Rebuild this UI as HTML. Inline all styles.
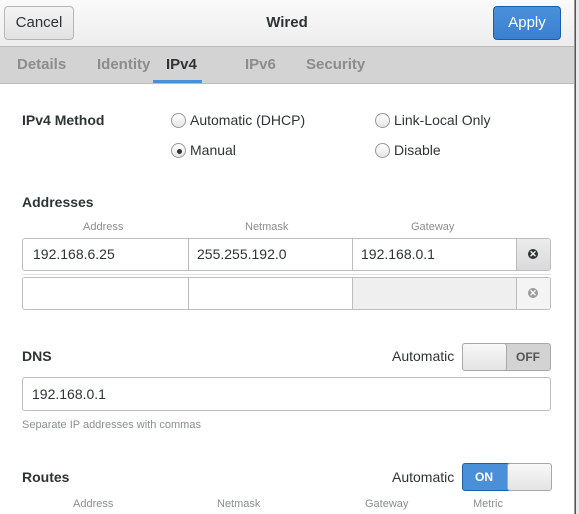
<!DOCTYPE html>
<html><head><meta charset="utf-8"><style>
body{margin:0;width:579px;height:514px;overflow:hidden;background:#e9e9e9;font-family:"Liberation Sans",sans-serif;font-size:14px;color:#2e3436;position:relative}
.a{position:absolute}
.win{left:0;top:0;width:574px;height:514px;background:#fff;border-right:1px solid #9a9a9a;overflow:hidden}
.hdr{left:0;top:0;width:574px;height:46px;background:linear-gradient(#fafafa,#ededed);border-bottom:1px solid #bcbcbc}
.btn{top:6px;height:32px;border-radius:4px;line-height:32px;text-align:center;font-size:15px}
.tabs{left:0;top:47px;width:574px;height:36px;background:#d3d3d3;border-bottom:1px solid #bcbcbc}
.tab{top:56px;font-size:15px;font-weight:bold;color:#8c8c8c}
.b{font-weight:bold}
.radio{width:13px;height:13px;border:1px solid #9a9a9a;border-radius:50%;background:linear-gradient(#fff,#e6e6e6)}
.cell{height:32px;border:1px solid #bdbdbd;background:#fff;box-sizing:border-box;line-height:30px;padding-left:8px}
.sm{font-size:11px;color:#8b8e8f}
.xc{width:10px;height:10px;border-radius:50%;color:#fff;font-size:9px;line-height:10px;text-align:center;font-weight:bold}
</style></head><body>
<div class="a" style="left:575px;top:0;width:1px;height:514px;background:#555"></div>
<div class="a win">
 <div class="a hdr"></div>
 <div class="a btn" style="left:4px;width:68px;border:1px solid #b6b6b6;background:linear-gradient(#f4f4f4,#e2e2e2);color:#2e3436">Cancel</div>
 <div class="a b" style="left:0;width:574px;top:14px;text-align:center;font-size:15px">Wired</div>
 <div class="a btn" style="left:493px;width:66px;border:1px solid #1d5da8;background:linear-gradient(#4a90d9,#3a80d0);color:#fff">Apply</div>
 <div class="a tabs"></div>
 <div class="a tab" style="left:17px">Details</div>
 <div class="a tab" style="left:97px">Identity</div>
 <div class="a tab" style="left:166px;color:#2e3436">IPv4</div>
 <div class="a" style="left:153px;top:80px;width:49px;height:3px;background:#4a90d9"></div>
 <div class="a tab" style="left:245px">IPv6</div>
 <div class="a tab" style="left:306px">Security</div>

 <div class="a b" style="left:22px;top:112px">IPv4 Method</div>
 <div class="a radio" style="left:171px;top:113px"></div><div class="a" style="left:190px;top:112px">Automatic (DHCP)</div>
 <div class="a radio" style="left:375px;top:113px"></div><div class="a" style="left:394px;top:112px">Link-Local Only</div>
 <div class="a radio" style="left:171px;top:143px"></div><div class="a" style="left:177px;top:149px;width:5px;height:5px;border-radius:50%;background:#2e3436"></div><div class="a" style="left:190px;top:142px">Manual</div>
 <div class="a radio" style="left:375px;top:143px"></div><div class="a" style="left:394px;top:142px">Disable</div>

 <div class="a b" style="left:22px;top:194px">Addresses</div>
 <div class="a sm" style="left:83px;top:221px">Address</div>
 <div class="a sm" style="left:245px;top:221px">Netmask</div>
 <div class="a sm" style="left:411px;top:221px">Gateway</div>
 <div class="a" style="left:22px;top:238px;width:529px;height:33px;border:1px solid #bdbdbd;border-radius:3px;overflow:hidden;box-sizing:border-box;display:flex">
  <div class="cell" style="width:166px;border:0;border-right:1px solid #bdbdbd;padding-left:10px">192.168.6.25</div>
  <div class="cell" style="width:164px;border:0;border-right:1px solid #bdbdbd">255.255.192.0</div>
  <div class="cell" style="width:164px;border:0;border-right:1px solid #bdbdbd">192.168.0.1</div>
  <div style="flex:1;background:linear-gradient(#ececec,#dadada);position:relative"><div class="a xc" style="left:11px;top:10px;background:#2e3436">✕</div></div>
 </div>
 <div class="a" style="left:22px;top:274px;width:529px;height:1px;background:#e0e0e0"></div>
 <div class="a" style="left:22px;top:277px;width:529px;height:33px;border:1px solid #bdbdbd;border-radius:3px;overflow:hidden;box-sizing:border-box;display:flex">
  <div class="cell" style="width:166px;border:0;border-right:1px solid #bdbdbd"></div>
  <div class="cell" style="width:164px;border:0;border-right:1px solid #bdbdbd"></div>
  <div class="cell" style="width:164px;border:0;border-right:1px solid #bdbdbd;background:#efefef"></div>
  <div style="flex:1;background:#f4f4f4;position:relative"><div class="a xc" style="left:11px;top:10px;background:#9a9a9a">✕</div></div>
 </div>

 <div class="a b" style="left:22px;top:348px">DNS</div>
 <div class="a" style="left:392px;top:348px">Automatic</div>
 <div class="a" style="left:462px;top:343px;width:89px;height:28px;border:1px solid #a8a8a8;border-radius:3px;background:#d3d3d3;box-sizing:border-box">
  <div class="a" style="left:-1px;top:-1px;width:45px;height:28px;border:1px solid #a8a8a8;border-radius:3px;background:linear-gradient(#f8f8f8,#e4e4e4);box-sizing:border-box"></div>
  <div class="a b" style="left:53px;top:6px;font-size:12px;color:#555">OFF</div>
 </div>
 <div class="a" style="left:22px;top:377px;width:529px;height:34px;border:1px solid #bdbdbd;border-radius:3px;box-sizing:border-box;line-height:32px;padding-left:9px">192.168.0.1</div>
 <div class="a sm" style="left:22px;top:419px">Separate IP addresses with commas</div>

 <div class="a b" style="left:22px;top:469px">Routes</div>
 <div class="a" style="left:392px;top:469px">Automatic</div>
 <div class="a" style="left:462px;top:463px;width:89px;height:28px;border:1px solid #1d5da8;border-radius:3px;background:#4a90d9;box-sizing:border-box">
  <div class="a b" style="left:12px;top:6px;font-size:12px;color:#fff">ON</div>
  <div class="a" style="left:44px;top:-1px;width:45px;height:28px;border:1px solid #a8a8a8;border-radius:3px;background:linear-gradient(#f8f8f8,#e4e4e4);box-sizing:border-box"></div>
 </div>
 <div class="a sm" style="left:73px;top:498px">Address</div>
 <div class="a sm" style="left:217px;top:498px">Netmask</div>
 <div class="a sm" style="left:365px;top:498px">Gateway</div>
 <div class="a sm" style="left:473px;top:498px">Metric</div>
</div>
</body></html>
